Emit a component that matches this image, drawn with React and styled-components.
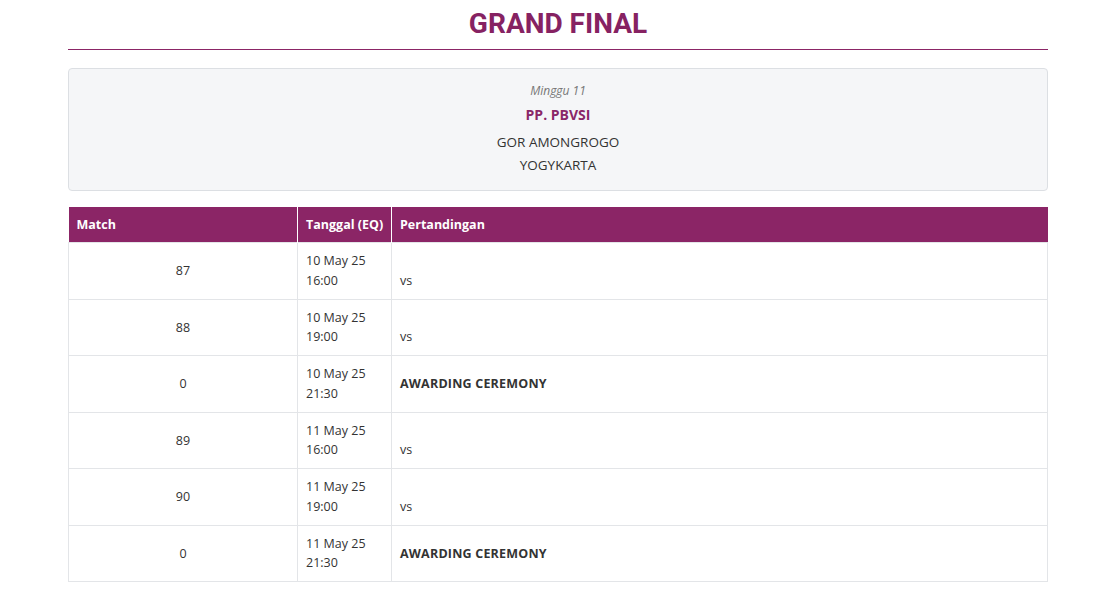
import React from 'react'
import styled, { createGlobalStyle } from 'styled-components'

const rows = [
  { match: 87, date: '10 May 25', time: '16:00', vs: true },
  { match: 88, date: '10 May 25', time: '19:00', vs: true },
  { match: 0, date: '10 May 25', time: '21:30', label: 'AWARDING CEREMONY' },
  { match: 89, date: '11 May 25', time: '16:00', vs: true },
  { match: 90, date: '11 May 25', time: '19:00', vs: true },
  { match: 0, date: '11 May 25', time: '21:30', label: 'AWARDING CEREMONY' },
]

export default () => (
  <Page>
    <GlobalStyle />
    <Title>GRAND FINAL</Title>
    <Info>
      <Week>Minggu 11</Week>
      <Organizer>PP. PBVSI</Organizer>
      <Venue>GOR AMONGROGO</Venue>
      <Venue>YOGYKARTA</Venue>
    </Info>
    <Table>
      <colgroup>
        <col style={{ width: '229px' }} />
        <col style={{ width: '94px' }} />
        <col />
      </colgroup>
      <thead>
        <tr>
          <Th>Match</Th>
          <Th>Tanggal (EQ)</Th>
          <Th>Pertandingan</Th>
        </tr>
      </thead>
      <tbody>
        {rows.map((r, i) => (
          <tr key={i}>
            <Td center>{r.match}</Td>
            <Td>
              <Line>{r.date}</Line>
              <Line>{r.time}</Line>
            </Td>
            <Td>
              {r.vs ? (
                <>
                  <Line />
                  <Line>vs</Line>
                </>
              ) : (
                <Ceremony>{r.label}</Ceremony>
              )}
            </Td>
          </tr>
        ))}
      </tbody>
    </Table>
  </Page>
)

/***************************** Styled Components *****************************/

const GlobalStyle = createGlobalStyle`
  body {
    margin: 0;
    background: #fff;
    font-family: "Open Sans", "Liberation Sans", sans-serif;
    color: #333;
  }
`

const Page = styled.div`
  width: 980px;
  margin-left: 68px;
  padding-top: 7px;
`

const Title = styled.h1`
  margin: 0 0 18px;
  padding-bottom: 8px;
  border-bottom: 1px solid #8b2566;
  text-align: center;
  font-family: Roboto, "Liberation Sans", sans-serif;
  font-weight: 700;
  font-size: 28px;
  line-height: 34px;
  color: #862262;
`

const Info = styled.div`
  background: #f5f6f8;
  border: 1px solid #dcdfe3;
  border-radius: 4px;
  padding: 12px 0 13px;
  text-align: center;
  margin-bottom: 16px;
`

const Week = styled.div`
  font-style: italic;
  font-size: 12px;
  line-height: 20px;
  color: #777;
  margin-bottom: 4px;
`

const Organizer = styled.div`
  font-weight: 700;
  font-size: 14px;
  line-height: 20px;
  color: #8a2768;
  margin-bottom: 6px;
`

const Venue = styled.div`
  font-size: 13.5px;
  line-height: 23px;
  color: #333;
`

const Table = styled.table`
  width: 100%;
  table-layout: fixed;
  border-collapse: collapse;
  font-size: 12.5px;
`

const Th = styled.th`
  background: #8b2566;
  color: #fff;
  text-align: left;
  font-weight: 700;
  font-size: 12.5px;
  height: 35px;
  padding: 0 7px 0 8px;
  white-space: nowrap;
  overflow: hidden;
  border-left: 1px solid #fff;
  &:first-child { border-left: none; }
`

const Td = styled.td`
  border: 1px solid #e3e5e8;
  padding: 8px;
  vertical-align: middle;
  text-align: ${p => (p.center ? 'center' : 'left')};
  color: #333;
`

const Line = styled.div`
  line-height: 19.75px;
  height: 19.75px;
`

const Ceremony = styled.div`
  font-weight: 700;
  letter-spacing: 0.2px;
`
